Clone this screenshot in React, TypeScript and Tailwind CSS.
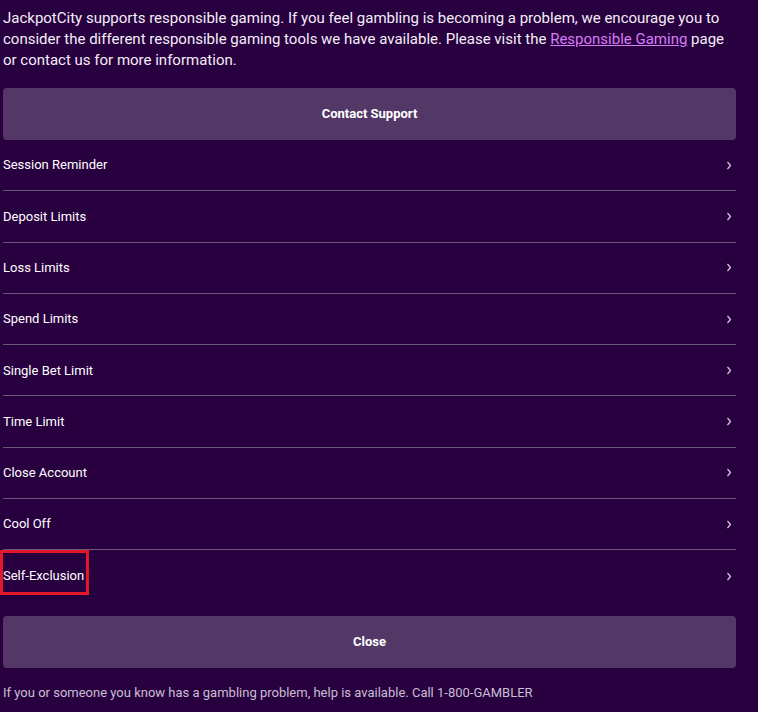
import React from "react";

const tools = [
  "Session Reminder",
  "Deposit Limits",
  "Loss Limits",
  "Spend Limits",
  "Single Bet Limit",
  "Time Limit",
  "Close Account",
  "Cool Off",
  "Self-Exclusion",
];

function Chevron() {
  return (
    <svg width="6" height="9" viewBox="0 0 6 9" className="text-[#d8cce4]">
      <path d="M1.5 1 L4.5 4.5 L1.5 8" fill="none" stroke="currentColor" strokeWidth="1.2" />
    </svg>
  );
}

export default function App() {
  return (
    <div
      className="min-h-[712px] w-full bg-[#28003f] text-white"
      style={{ fontFamily: "Roboto, 'Liberation Sans', sans-serif" }}
    >
      <div className="w-[733px] ml-[3px] pt-[8px]">
        <p className="text-[15px] leading-[21px] text-[#f3eef7]">
          JackpotCity supports responsible gaming. If you feel gambling is becoming a problem, we encourage you to
          consider the different responsible gaming tools we have available. Please visit the{" "}
          <a href="#" className="text-[#d77df5] underline">Responsible Gaming</a> page or contact us for more information.
        </p>

        <button className="mt-[17px] w-full h-[52px] rounded-[4px] bg-[#533867] text-[13px] font-bold text-white">
          Contact Support
        </button>

        <ul>
          {tools.map((t, i) => (
            <li
              key={t}
              className={
                "relative flex items-center justify-between h-[51.3px] text-[13px] text-white " +
                (i < tools.length - 1 ? "border-b border-[#6a5878]" : "")
              }
            >
              <span>{t}</span>
              <span className="mr-[4px] flex items-center">
                <Chevron />
              </span>
              {t === "Self-Exclusion" && (
                <div className="absolute left-[-3px] top-[0px] w-[89px] h-[45px] border-[3px] border-[#e3192b]" />
              )}
            </li>
          ))}
        </ul>

        <button className="mt-[14px] w-full h-[52px] rounded-[4px] bg-[#533867] text-[13px] font-bold text-white">
          Close
        </button>

        <p className="mt-[16px] text-[13px] leading-[17px] text-[#c9bfd3]">
          If you or someone you know has a gambling problem, help is available. Call 1-800-GAMBLER
        </p>
      </div>
    </div>
  );
}
